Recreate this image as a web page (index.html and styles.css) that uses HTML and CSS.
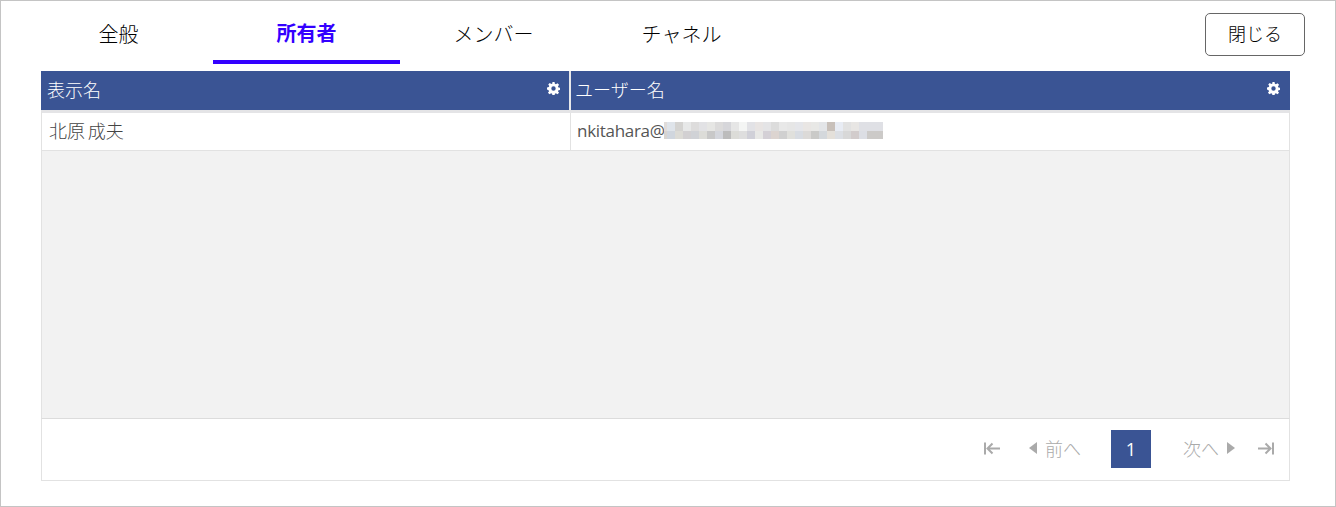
FILE: index.html
```html
<!DOCTYPE html>
<html lang="ja">
<head>
<meta charset="utf-8">
<title>所有者</title>
<link rel="stylesheet" href="styles.css">
</head>
<body>
<main class="panel">
  <header class="topbar">
    <nav class="tabs">
      <a class="tab">全般</a>
      <a class="tab active">所有者</a>
      <a class="tab">メンバー</a>
      <a class="tab">チャネル</a>
    </nav>
    <button class="close">閉じる</button>
  </header>
  <section class="grid">
    <div class="head">
      <div class="hcell first"><span>表示名</span><svg class="gear" viewBox="0 0 16 16"><path fill="#fff" fill-rule="evenodd" d="M6.7 0h2.6l.4 2.300 1.300.6 1.900-1.300 1.900 1.900-1.300 1.900.6 1.300 2.300.4v2.600l-2.300.4-.6 1.300 1.300 1.900-1.900 1.900-1.900-1.300-1.300.6-.4 2.300H6.700l-.4-2.300-1.300-.6-1.900 1.300-1.900-1.900 1.300-1.900-.6-1.300L-.1 9.300V6.700l2.300-.4.6-1.300-1.300-1.900 1.900-1.900 1.900 1.300 1.300-.6zM8 5.300a2.700 2.700 0 1 0 0 5.400 2.700 2.700 0 0 0 0-5.400z"/></svg></div>
      <div class="hcell second"><span>ユーザー名</span><svg class="gear" viewBox="0 0 16 16"><path fill="#fff" fill-rule="evenodd" d="M6.7 0h2.600l.4 2.300 1.300.6 1.900-1.300 1.900 1.900-1.300 1.900.6 1.300 2.300.4v2.600l-2.300.4-.6 1.300 1.300 1.900-1.900 1.900-1.900-1.300-1.300.6-.4 2.300H6.700l-.4-2.300-1.300-.6-1.900 1.300-1.900-1.900 1.300-1.900-.6-1.300L-.1 9.300V6.700l2.300-.4.6-1.300-1.300-1.900 1.900-1.900 1.900 1.300 1.300-.6zM8 5.300a2.700 2.700 0 1 0 0 5.400 2.700 2.700 0 0 0 0-5.400z"/></svg></div>
    </div>
    <div class="body">
      <div class="row">
        <div class="cell first">北原 成夫</div>
        <div class="cell second"><span class="mail">nkitahara@</span><span class="blur"></span></div>
      </div>
    </div>
    <footer class="pager">
      <svg class="pico" viewBox="0 0 16 13"><path class="pstroke" d="M1 .5v12M8.500 1.500 3.500 6.500l5 5M4 6.500h12"/></svg>
      <span class="pitem prev"><i class="tri left"></i>前へ</span>
      <span class="page">1</span>
      <span class="pitem next">次へ<i class="tri right"></i></span>
      <svg class="pico plast" viewBox="0 0 16 13"><path class="pstroke" d="M15 .5v12M7.500 1.500l5 5-5 5M12 6.500H0"/></svg>
    </footer>
  </section>
</main>
</body>
</html>
```

FILE: styles.css
```css
* { box-sizing: border-box; }
html, body { margin: 0; height: 100%; }
body { font-family: "Open Sans", "Noto Sans CJK JP", sans-serif; font-weight: 300; background: #fff; }
.panel { width: 1336px; height: 507px; border: 1px solid #c4c4c4; padding: 0 45px 25px 40px; display: flex; flex-direction: column; }
.topbar { display: flex; justify-content: space-between; height: 69px; flex: none; margin-right: -15px; }
.tabs { display: flex; height: 63px; }
.tab { display: flex; align-items: center; justify-content: center; height: 63px; padding-top: 1px; width: 172px; font-size: 20px; color: #000; }
.tab:nth-child(1) { padding-right: 17px; }
.tab:nth-child(2) { width: 187px; }
.tab:nth-child(3) { width: 187px; }
.tab:nth-child(4) { width: 189px; }
.tab.active { color: #3300ff; font-weight: 700; border-bottom: 4px solid #3300ff; padding-top: 4px; }
.close { width: 100px; height: 43px; margin-top: 12px; border: 1px solid #666; border-radius: 5px; background: #fff; color: #000; font: inherit; font-size: 18px; padding: 0 0 3px; }
.grid { flex: 1; display: flex; flex-direction: column; min-height: 0; }
.head { display: flex; height: 39px; background: #3a5494; color: #fff; font-size: 18px; flex: none; margin-top: 1px; }
.hcell { display: flex; align-items: center; justify-content: space-between; padding: 0 10px 3px 6px; }
.hcell.first { width: 530px; padding-right: 9px; border-right: 2px solid #e8e8ea; }
.hcell.second { flex: 1; padding-left: 4px; }
.gear { width: 13px; height: 13px; margin-bottom: 2px; }
.body { flex: 1; background: #f2f2f2; border: 1px solid #e2e2e2; border-top: 3px solid #e4e4e6; border-bottom: 1px solid #dcdcdc; }
.row { display: flex; height: 38px; background: #fff; border-bottom: 1px solid #e2e2e2; font-size: 18px; color: #444; }
.cell { display: flex; align-items: center; padding-bottom: 2px; }
.cell.first { width: 529px; padding: 0 0 4px 7px; border-right: 1px solid #e2e2e2; word-spacing: -2px; }
.cell.second { padding-left: 6px; }
.mail { font-size: 17px; font-weight: 400; letter-spacing: -0.3px; width: 87px; white-space: nowrap; color: #555; }
.blur { display: block; width: 219px; height: 17px; background:
  linear-gradient(90deg, #e0dcda 0 3px, #dfe4ea 3px 11px, #d4d3d1 11px 19px, #e7e8e8 19px 27px, #dddcdc 27px 35px, #e2e2e5 35px 43px, #e6e6e4 43px 51px, #dcdbdb 51px 59px, #d6d6da 59px 67px, #e6e6e6 67px 75px, #f4f5f4 75px 83px, #e2e2e6 83px 91px, #e8e4e3 91px 99px, #e4e4e6 99px 107px, #dcdcdc 107px 115px, #e8e8e8 115px 123px, #e6e6e6 123px 131px, #e5e6ea 131px 139px, #e9e6e4 139px 147px, #e8e8e6 147px 155px, #e3e5e8 155px 163px, #c8c0ba 163px 171px, #e8ecf4 171px 179px, #e2e2e2 179px 187px, #e8e6e4 187px 195px, #dfe0e5 195px 219px) top / 100% 9px no-repeat,
  linear-gradient(90deg, #d8d4d0 0 3px, #d0d6de 3px 11px, #dcdbd6 11px 19px, #d2d0d2 19px 27px, #d0d2d6 27px 35px, #dcdcd8 35px 43px, #c8c8c8 43px 51px, #d4d6dc 51px 59px, #bcbcbc 59px 67px, #dcdcd8 67px 75px, #dedede 75px 83px, #d0d0d8 83px 91px, #e8e8e6 91px 99px, #d4d0d6 99px 107px, #dcd4d0 107px 115px, #d0d0d0 115px 123px, #e0e0dc 123px 131px, #d8dce2 131px 139px, #dcdad8 139px 147px, #cacac8 147px 155px, #d4d8dc 155px 163px, #e4e0da 163px 171px, #dcdfe4 171px 179px, #d8d8d8 179px 187px, #d2cccc 187px 195px, #dcdee4 195px 203px, #cccac8 203px 219px) bottom / 100% 8px no-repeat; }
.pager { flex: none; height: 62px; background: #fff; border: 1px solid #e2e2e2; border-top: 0; display: flex; align-items: center; justify-content: flex-end; font-size: 18px; color: #aaa; padding: 0 15px 2px 0; }
.pico { width: 16px; height: 13px; flex: none; }
.pstroke { fill: none; stroke: #aaa; stroke-width: 2; }
.pitem { display: flex; align-items: center; gap: 8px; padding-bottom: 1px; }
.tri { display: block; width: 0; height: 0; border-top: 6px solid transparent; border-bottom: 6px solid transparent; }
.tri.left { border-right: 8px solid #aaa; }
.tri.right { border-left: 8px solid #aaa; }
.prev { margin-left: 29px; }
.page { width: 40px; height: 38px; margin-left: 30px; background: #3a5494; color: #fff; font-weight: 400; display: flex; align-items: center; justify-content: center; font-size: 18px; }
.next { margin-left: 32px; }
.plast { margin-left: 23px; }
```
